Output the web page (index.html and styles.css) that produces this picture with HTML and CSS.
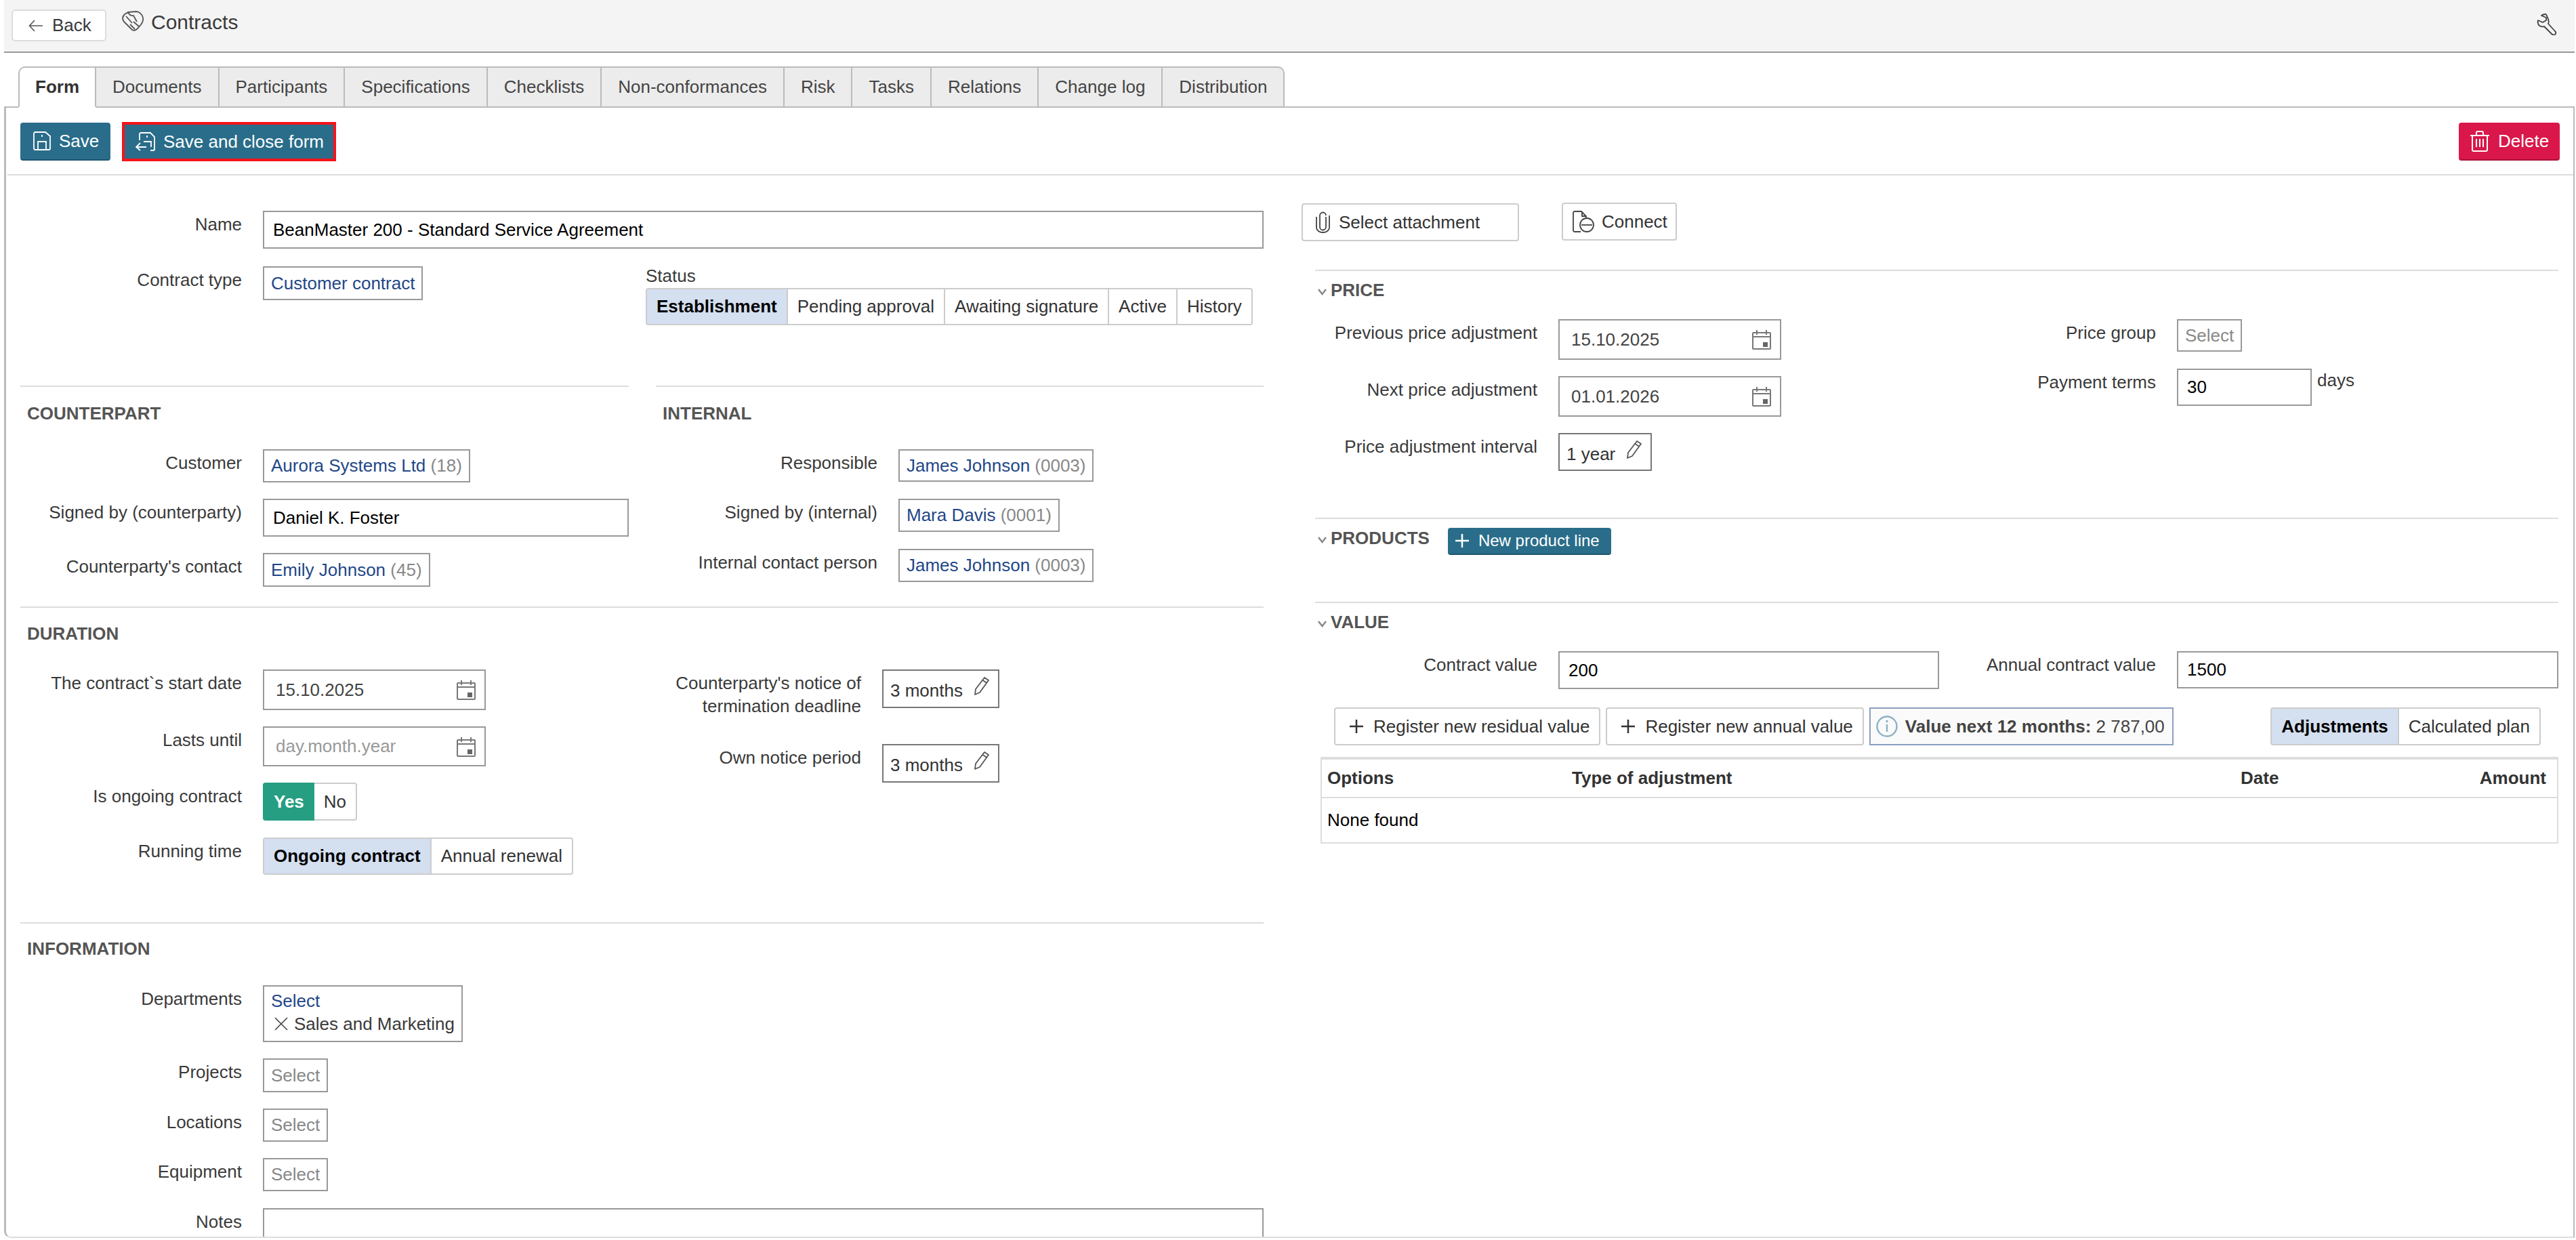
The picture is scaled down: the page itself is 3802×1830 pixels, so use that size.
FILE: index.html
```html
<!DOCTYPE html>
<html>
<head>
    <meta charset="utf-8">
    <title>Contracts</title>
    <link rel="stylesheet" href="styles.css">
</head>
<body>
<svg class="sprite" width="0" height="0">
    <symbol id="i-cal" viewBox="0 0 28 30">
        <path d="M2 5h24a1 1 0 0 1 1 1v22a1 1 0 0 1-1 1H2a1 1 0 0 1-1-1V6a1 1 0 0 1 1-1zM1 11h26M7 1v7M21 1v7" fill="none" stroke="#777" stroke-width="2"/>
        <rect x="16" y="19" width="7" height="7" fill="#666"/>
    </symbol>
    <symbol id="i-pencil" viewBox="0 0 26 28">
        <path d="M18 2l6 4-13 18-7 3 1-8zM15.500 6l6 4" fill="none" stroke="#555" stroke-width="1.800" stroke-linejoin="round"/>
    </symbol>
    <symbol id="i-plus" viewBox="0 0 20 20">
        <path d="M10 0v20M0 10h20" fill="none" stroke="currentColor" stroke-width="2.500"/>
    </symbol>
    <symbol id="i-chev" viewBox="0 0 13 10">
        <path d="M1 1l5.500 7L12 1" fill="none" stroke="#888" stroke-width="2.500"/>
    </symbol>
</svg>

<div class="page">
    <div class="topbar">
        <a class="back-btn">
            <svg class="back-arrow" width="22" height="18" viewBox="0 0 22 18"><path d="M21 9H2M9 1L1.500 9 9 17" fill="none" stroke="#555" stroke-width="1.600"/></svg>
            Back
        </a>
        <svg class="title-icon" width="32" height="30" viewBox="0 0 32 30"><path d="M9 2l12-1c4 0 9 4 10 9 1 4-2 10-7 15-2 3-6 5-9 3L3 16C0 12 1 8 4 5zM9 2c2 4 4 6 8 5l5 9M6 8l9 10M12 20l7 7M17 16l8 7" fill="none" stroke="#555" stroke-width="1.800" stroke-linejoin="round"/></svg>
        <span class="title">Contracts</span>
        <svg class="wrench" width="32" height="32" viewBox="0 0 32 32"><path d="M13 1c-3 0-5 1-6 2l7 3v4l-5 3-7-3c-1 3 0 6 2 8 2 1 5 2 7 1l11 11c2 2 4 2 5 1s2-3 0-5L17 15c1-2 1-5-1-9-1-3-2-5-3-5z" fill="none" stroke="#444" stroke-width="1.800" stroke-linejoin="round"/></svg>
    </div>

    <div class="tabs">
        <a class="tab active">Form</a>
        <a class="tab">Documents</a>
        <a class="tab">Participants</a>
        <a class="tab">Specifications</a>
        <a class="tab">Checklists</a>
        <a class="tab">Non-conformances</a>
        <a class="tab">Risk</a>
        <a class="tab">Tasks</a>
        <a class="tab">Relations</a>
        <a class="tab">Change log</a>
        <a class="tab">Distribution</a>
    </div>

    <div class="panel">
        <div class="toolbar">
            <a class="btn btn-primary btn-save">
                <svg width="28" height="28" viewBox="0 0 28 28"><path d="M4 1h15l7 6v18a2 2 0 0 1-2 2H4a2 2 0 0 1-2-2V3a2 2 0 0 1 2-2zM8 27V15h12v12M14 5v3" fill="none" stroke="#fff" stroke-width="1.800"/></svg>
                Save
            </a>
            <a class="btn btn-primary btn-close">
                <svg width="30" height="28" viewBox="0 0 30 28"><path d="M6 12V3a2 2 0 0 1 2-2h14l6 6v18a2 2 0 0 1-2 2h-4M17 5v3M12 14h11v8M1 22h15M7 16l-6 6 6 5" fill="none" stroke="#fff" stroke-width="1.800"/></svg>
                Save and close form
            </a>
            <a class="btn btn-danger">
                <svg width="28" height="31" viewBox="0 0 28 31"><path d="M0 7h28M9 7V3a2 2 0 0 1 2-2h6a2 2 0 0 1 2 2v4M3 7v21a2 2 0 0 0 2 2h18a2 2 0 0 0 2-2V7M9 12v12M14 12v12M19 12v12" fill="none" stroke="#fff" stroke-width="2"/></svg>
                Delete
            </a>
        </div>

        <div class="form">
            <div class="col-left">
                <div class="row row-name">
                    <label class="lbl">Name</label>
                    <div class="input grow h56 dark">BeanMaster 200 - Standard Service Agreement</div>
                </div>
                <div class="head-row">
                    <div class="row type-row">
                        <label class="lbl">Contract type</label>
                        <a class="pick h50">Customer contract</a>
                    </div>
                    <div class="status">
                        <div class="status-lbl">Status</div>
                        <div class="seg h55">
                            <span class="seg-item active">Establishment</span>
                            <span class="seg-item">Pending approval</span>
                            <span class="seg-item">Awaiting signature</span>
                            <span class="seg-item">Active</span>
                            <span class="seg-item">History</span>
                        </div>
                    </div>
                </div>

                <div class="split">
                    <div class="sect sect-counterpart">
                        <h3 class="sect-title">COUNTERPART</h3>
                        <div class="rows">
                            <div class="row">
                                <label class="lbl">Customer</label>
                                <a class="pick h49">Aurora Systems Ltd&nbsp;<span class="num">(18)</span></a>
                            </div>
                            <div class="row">
                                <label class="lbl">Signed by (counterparty)</label>
                                <div class="input grow h56 dark">Daniel K. Foster</div>
                            </div>
                            <div class="row">
                                <label class="lbl">Counterparty's contact</label>
                                <a class="pick h50">Emily Johnson&nbsp;<span class="num">(45)</span></a>
                            </div>
                        </div>
                    </div>
                    <div class="sect sect-internal">
                        <h3 class="sect-title">INTERNAL</h3>
                        <div class="rows rows-wide">
                            <div class="row">
                                <label class="lbl lbl-sm">Responsible</label>
                                <a class="pick h48">James Johnson&nbsp;<span class="num">(0003)</span></a>
                            </div>
                            <div class="row">
                                <label class="lbl lbl-sm">Signed by (internal)</label>
                                <a class="pick h49">Mara Davis&nbsp;<span class="num">(0001)</span></a>
                            </div>
                            <div class="row">
                                <label class="lbl lbl-sm">Internal contact person</label>
                                <a class="pick h49">James Johnson&nbsp;<span class="num">(0003)</span></a>
                            </div>
                        </div>
                    </div>
                </div>

                <div class="sect sect-duration">
                    <h3 class="sect-title">DURATION</h3>
                    <div class="duration-grid">
                        <div class="rows">
                            <div class="row">
                                <label class="lbl">The contract`s start date</label>
                                <div class="input date h60">15.10.2025
                                    <svg class="cal" width="28" height="30"><use href="#i-cal"/></svg>
                                </div>
                            </div>
                            <div class="row">
                                <label class="lbl">Lasts until</label>
                                <div class="input date h59 ph">day.month.year
                                    <svg class="cal" width="28" height="30"><use href="#i-cal"/></svg>
                                </div>
                            </div>
                            <div class="row row-gap25">
                                <label class="lbl">Is ongoing contract</label>
                                <div class="seg h56">
                                    <span class="seg-item yes">Yes</span>
                                    <span class="seg-item">No</span>
                                </div>
                            </div>
                            <div class="row">
                                <label class="lbl">Running time</label>
                                <div class="seg h55">
                                    <span class="seg-item active">Ongoing contract</span>
                                    <span class="seg-item">Annual renewal</span>
                                </div>
                            </div>
                        </div>
                        <div class="rows notice-rows">
                            <div class="row">
                                <label class="lbl lbl-notice">Counterparty's notice of<br>termination deadline</label>
                                <div class="edit h57"><span>3 months</span><svg width="26" height="28"><use href="#i-pencil"/></svg></div>
                            </div>
                            <div class="row">
                                <label class="lbl lbl-notice">Own notice period</label>
                                <div class="edit h57"><span>3 months</span><svg width="26" height="28"><use href="#i-pencil"/></svg></div>
                            </div>
                        </div>
                    </div>
                </div>

                <div class="sect sect-info">
                    <h3 class="sect-title">INFORMATION</h3>
                    <div class="rows">
                        <div class="row">
                            <label class="lbl">Departments</label>
                            <div class="multi">
                                <a class="link">Select</a>
                                <div class="chip">
                                    <svg width="20" height="20" viewBox="0 0 20 20"><path d="M1 1l18 18M19 1L1 19" fill="none" stroke="#444" stroke-width="1.600"/></svg>
                                    Sales and Marketing
                                </div>
                            </div>
                        </div>
                        <div class="row">
                            <label class="lbl">Projects</label>
                            <a class="pick pick-empty h50">Select</a>
                        </div>
                        <div class="row">
                            <label class="lbl">Locations</label>
                            <a class="pick pick-empty h49">Select</a>
                        </div>
                        <div class="row row-gap25">
                            <label class="lbl">Equipment</label>
                            <a class="pick pick-empty h49">Select</a>
                        </div>
                        <div class="row">
                            <label class="lbl">Notes</label>
                            <div class="input grow notes"></div>
                        </div>
                    </div>
                </div>
            </div>

            <div class="col-right">
                <div class="attach">
                    <a class="btn-line attach-select">
                        <svg width="21" height="32" viewBox="0 0 21 32"><path d="M15 8v15a4.500 4.500 0 0 1-9 0V6a4.500 4.500 0 0 1 9 0M1 8v16a9.500 7 0 0 0 19 0V6" fill="none" stroke="#444" stroke-width="1.800"/></svg>
                        Select attachment
                    </a>
                    <a class="btn-line attach-connect">
                        <svg width="32" height="32" viewBox="0 0 32 32"><path d="M12 31H3a2 2 0 0 1-2-2V3a2 2 0 0 1 2-2h10l7 7v4M14 1v7h6" fill="none" stroke="#444" stroke-width="1.800"/><circle cx="21" cy="21" r="10" fill="#fff" stroke="#444" stroke-width="1.800"/><path d="M13 21h16" stroke="#444" stroke-width="1.800"/></svg>
                        Connect
                    </a>
                </div>

                <div class="sect sect-price">
                    <h3 class="sect-title"><svg class="chev" width="13" height="10"><use href="#i-chev"/></svg>PRICE</h3>
                    <div class="two-col">
                        <div class="rows">
                            <div class="row">
                                <label class="lbl lbl-right">Previous price adjustment</label>
                                <div class="input date h60">15.10.2025
                                    <svg class="cal" width="28" height="30"><use href="#i-cal"/></svg>
                                </div>
                            </div>
                            <div class="row">
                                <label class="lbl lbl-right">Next price adjustment</label>
                                <div class="input date h60">01.01.2026
                                    <svg class="cal" width="28" height="30"><use href="#i-cal"/></svg>
                                </div>
                            </div>
                            <div class="row">
                                <label class="lbl lbl-right">Price adjustment interval</label>
                                <div class="edit h56"><span>1 year</span><svg width="26" height="28"><use href="#i-pencil"/></svg></div>
                            </div>
                        </div>
                        <div class="rows rows-wide">
                            <div class="row">
                                <label class="lbl lbl-annual">Price group</label>
                                <a class="pick pick-empty h48">Select</a>
                            </div>
                            <div class="row">
                                <label class="lbl lbl-annual">Payment terms</label>
                                <div class="input terms h55 dark">30</div>
                                <span class="unit">days</span>
                            </div>
                        </div>
                    </div>
                </div>

                <div class="sect sect-products">
                    <h3 class="sect-title"><svg class="chev" width="13" height="10"><use href="#i-chev"/></svg>PRODUCTS</h3>
                    <a class="btn btn-primary btn-new">
                        <svg width="20" height="20"><use href="#i-plus"/></svg>
                        New product line
                    </a>
                </div>

                <div class="sect sect-value">
                    <h3 class="sect-title"><svg class="chev" width="13" height="10"><use href="#i-chev"/></svg>VALUE</h3>
                    <div class="two-col">
                        <div class="row">
                            <label class="lbl lbl-right">Contract value</label>
                            <div class="input grow h56 dark">200</div>
                        </div>
                        <div class="row">
                            <label class="lbl lbl-annual">Annual contract value</label>
                            <div class="input grow h55 dark">1500</div>
                        </div>
                    </div>
                    <div class="actions">
                        <a class="btn-line btn-reg"><svg width="20" height="20"><use href="#i-plus"/></svg>Register new residual value</a>
                        <a class="btn-line btn-reg"><svg width="20" height="20"><use href="#i-plus"/></svg>Register new annual value</a>
                        <div class="info-box">
                            <svg width="32" height="32" viewBox="0 0 32 32"><circle cx="16" cy="16" r="14.500" fill="none" stroke="#8bb0c6" stroke-width="2.400"/><path d="M16 13v11" stroke="#8bb0c6" stroke-width="2.400"/><circle cx="16" cy="8.500" r="1.700" fill="#8bb0c6"/></svg>
                            <b>Value next 12 months:</b>&nbsp;2 787,00
                        </div>
                        <div class="seg h56 seg-plan">
                            <span class="seg-item active">Adjustments</span>
                            <span class="seg-item">Calculated plan</span>
                        </div>
                    </div>
                    <table class="grid">
                        <thead>
                            <tr>
                                <th class="c-options">Options</th>
                                <th class="c-type">Type of adjustment</th>
                                <th class="c-date">Date</th>
                                <th class="c-amount">Amount</th>
                            </tr>
                        </thead>
                        <tbody>
                            <tr><td colspan="4">None found</td></tr>
                        </tbody>
                    </table>
                </div>
            </div>
        </div>
    </div>
</div>
</body>
</html>
```

FILE: styles.css
```css
* {
    margin: 0;
    padding: 0;
    box-sizing: border-box;
}
html, body {
    height: 1830px;
    overflow: hidden;
    background: #fff;
}
body {
    font-family: "Liberation Sans", Arial, sans-serif;
    font-size: 26px;
    color: #3a3a3a;
}
.sprite {
    position: absolute;
}
svg {
    flex: none;
    display: block;
}
.page {
    margin: 0 2px 0 6px;
}

/* top bar */
.topbar {
    height: 78px;
    background: #f4f4f4;
    border-bottom: 2px solid #999;
    display: flex;
    align-items: flex-start;
    padding: 14px 24px 0 11px;
}
.back-btn {
    width: 140px;
    height: 47px;
    background: #fff;
    border: 2px solid #ddd;
    border-radius: 5px;
    display: flex;
    align-items: center;
    padding-left: 23px;
    gap: 13px;
}
.title-icon {
    margin: 2px 11px 0 23px;
}
.title {
    font-size: 30px;
    line-height: 38px;
}
.wrench {
    margin: 6px 0 0 auto;
}

/* tabs */
.tabs {
    display: flex;
    height: 61px;
    margin: 20px 0 -2px 21px;
    position: relative;
    z-index: 2;
}
.tab {
    line-height: 56px;
    padding: 0 24px;
    background: #ececec;
    border-top: 2px solid #bbb;
    border-right: 2px solid #bbb;
    border-bottom: 2px solid #bbb;
    color: #444;
}
.tab.active {
    background: #fff;
    font-weight: bold;
    color: #333;
    border-left: 2px solid #bbb;
    border-bottom-color: #fff;
    border-top-left-radius: 10px;
    padding: 0 23px;
}
.tab:last-child {
    border-top-right-radius: 10px;
}

.panel {
    height: 1670px;
    border: 2px solid #bbb;
    border-left-width: 3px;
    border-bottom-color: #ddd;
    border-bottom-left-radius: 10px;
    overflow: hidden;
}

/* toolbar */
.toolbar {
    height: 100px;
    margin: 0 0 0 2px;
    border-bottom: 2px solid #ddd;
    display: flex;
    align-items: flex-start;
    padding: 22px 20px 0 19px;
}
.btn {
    display: flex;
    align-items: center;
    color: #fff;
    border-radius: 4px;
}
.btn-primary {
    background: #2a6d8a;
    border-bottom: 2px solid #1e5570;
}
.btn-save {
    width: 133px;
    height: 56px;
    padding-left: 18px;
    gap: 11px;
}
.btn-close {
    width: 316px;
    height: 58px;
    margin: -1px 0 0 17px;
    border: 4px solid #f5141c;
    border-radius: 0;
    padding-left: 16px;
    gap: 11px;
}
.btn-danger {
    width: 149px;
    height: 56px;
    margin-left: auto;
    background: #d9174a;
    border-bottom: 2px solid #aa1239;
    padding-left: 17px;
    gap: 13px;
}

/* form */
.form {
    display: grid;
    grid-template-columns: 1835px 1835px;
    column-gap: 76px;
    margin-left: 21px;
}
.row {
    display: flex;
    align-items: flex-start;
}
.lbl {
    flex: none;
    width: 327px;
    margin-right: 31px;
    text-align: right;
    line-height: 40px;
}
.rows {
    display: flex;
    flex-direction: column;
    gap: 24px;
}
.rows-wide {
    gap: 25px;
}
.row-gap25 {
    margin-bottom: 1px;
}
.input, .pick, .edit, .multi {
    border: 2px solid #999;
    background: #fff;
}
.input {
    display: flex;
    align-items: center;
    padding-left: 13px;
}
.grow {
    flex: 1;
}
.dark {
    color: #000;
}
.h48 { height: 48px; }
.h49 { height: 49px; }
.h50 { height: 50px; }
.h55 { height: 55px; }
.h56 { height: 56px; }
.h57 { height: 57px; }
.h59 { height: 59px; }
.h60 { height: 60px; }
.pick {
    display: flex;
    align-items: center;
    padding: 0 10px;
    color: #1f4788;
}
.pick .num {
    color: #888;
}
.pick-empty {
    color: #888;
}
.date {
    width: 329px;
    padding-left: 17px;
    justify-content: space-between;
    padding-right: 13px;
    color: #444;
}
.date.ph {
    color: #999;
}
.edit {
    display: flex;
    align-items: center;
    padding: 0 12px 0 10px;
    gap: 14px;
    color: #333;
    border-color: #777;
}
.edit span {
    margin-top: 6px;
}
.edit svg {
    margin-top: -9px;
}

/* segmented buttons */
.seg {
    display: inline-flex;
    border: 2px solid #ccc;
    border-radius: 4px;
    background: #fff;
}
.seg-item {
    display: flex;
    align-items: center;
    padding: 0 14px;
    border-right: 2px solid #ccc;
    color: #333;
}
.seg-item:last-child {
    border-right: 0;
}
.seg-item.active {
    background: #d4dff0;
    font-weight: bold;
    color: #000;
}
.seg-item.yes {
    margin: -2px 0 -2px -2px;
    padding: 0 15px 0 16px;
    background: #259e82;
    color: #fff;
    font-weight: bold;
    border-radius: 4px 0 0 4px;
    border-right: 0;
}

/* left column */
.row-name {
    margin-top: 52px;
}
.head-row {
    display: flex;
    margin-top: 26px;
}
.type-row {
    width: 923px;
}
.status-lbl {
    line-height: 28px;
    margin-bottom: 4px;
}
.split {
    display: grid;
    grid-template-columns: 898px 897px;
    column-gap: 40px;
    margin-top: 89px;
}
.sect {
    border-top: 2px solid #ddd;
}
.sect-title {
    font-size: 26px;
    line-height: 40px;
    color: #555;
    padding-left: 10px;
}
.sect-counterpart, .sect-internal {
    padding-top: 19px;
    height: 326px;
}
.sect-internal .sect-title {
    padding-left: 10px;
}
.sect-counterpart .rows, .sect-internal .rows, .sect-duration .duration-grid, .sect-info .rows {
    margin-top: 33px;
}
.lbl-sm {
    width: 327px;
}
.sect-duration {
    padding-top: 18px;
    height: 466px;
}
.duration-grid {
    display: grid;
    grid-template-columns: 938px 897px;
}
.notice-rows {
    gap: 39px;
}
.lbl-notice {
    width: 303px;
    line-height: 34px;
    padding-top: 3px;
}
.sect-info {
    padding-top: 17px;
}
.sect-info .rows {
    margin-top: 34px;
}
.multi {
    height: 84px;
    padding: 4px 10px 0;
    line-height: 34px;
}
.link {
    color: #1f4788;
    display: block;
}
.chip {
    display: flex;
    align-items: center;
    gap: 9px;
    padding-left: 5px;
}
.notes {
    height: 120px;
}

/* right column */
.col-right {
    padding-top: 40px;
}
.attach {
    display: flex;
    align-items: flex-start;
    gap: 63px;
    margin-left: -20px;
    height: 99px;
}
.btn-line {
    display: flex;
    align-items: center;
    height: 56px;
    background: #fff;
    border: 2px solid #ccc;
    border-radius: 4px;
    color: #333;
}
.attach-select {
    width: 321px;
    margin-top: 1px;
    padding-left: 19px;
    gap: 13px;
}
.attach-connect {
    width: 170px;
    padding-left: 14px;
    gap: 11px;
}
.chev {
    display: inline-block;
    margin: 0 6px 0 4px;
    vertical-align: 1px;
}
.sect-price .sect-title, .sect-products .sect-title, .sect-value .sect-title {
    padding-left: 0;
}
.sect-price {
    padding-top: 8px;
    height: 366px;
}
.sect-price .two-col {
    margin-top: 23px;
}
.two-col {
    display: grid;
    grid-template-columns: 921px 914px;
}
.lbl-right {
    width: 328px;
}
.lbl-annual {
    width: 320px;
}
.terms {
    width: 199px;
}
.unit {
    margin-left: 8px;
    line-height: 34px;
}
.sect-products {
    display: flex;
    align-items: flex-start;
    padding-top: 8px;
    height: 124px;
}
.btn-new {
    height: 40px;
    width: 241px;
    margin: 5px 0 0 27px;
    padding-left: 11px;
    gap: 14px;
    font-size: 24px;
}
.sect-value {
    padding-top: 8px;
}
.sect-value .two-col {
    margin-top: 23px;
}
.actions {
    display: flex;
    align-items: flex-start;
    margin: 27px 26px 0 28px;
    gap: 8px;
}
.btn-reg {
    padding: 0 14px 0 21px;
    gap: 15px;
    color: #333;
}
.info-box {
    display: flex;
    align-items: center;
    width: 449px;
    height: 56px;
    padding-left: 8px;
    border: 2px solid #8ba0c0;
    background: #fafafa;
    color: #444;
}
.info-box svg {
    margin-right: 11px;
}
.seg-plan {
    margin-left: auto;
}
.grid {
    border-collapse: collapse;
    width: 1827px;
    margin: 17px 0 0 8px;
    border: 2px solid #ddd;
    border-top-width: 4px;
}
.grid th {
    height: 58px;
    text-align: left;
    color: #333;
    padding: 0 8px;
    border-bottom: 2px solid #ddd;
}
.grid td {
    height: 67px;
    color: #000;
    padding: 0 8px;
}
.c-options { width: 362px; }
.c-type { width: 987px; }
.c-date { width: 300px; }
.grid .c-amount {
    text-align: right;
    padding-right: 16px;
}
```
